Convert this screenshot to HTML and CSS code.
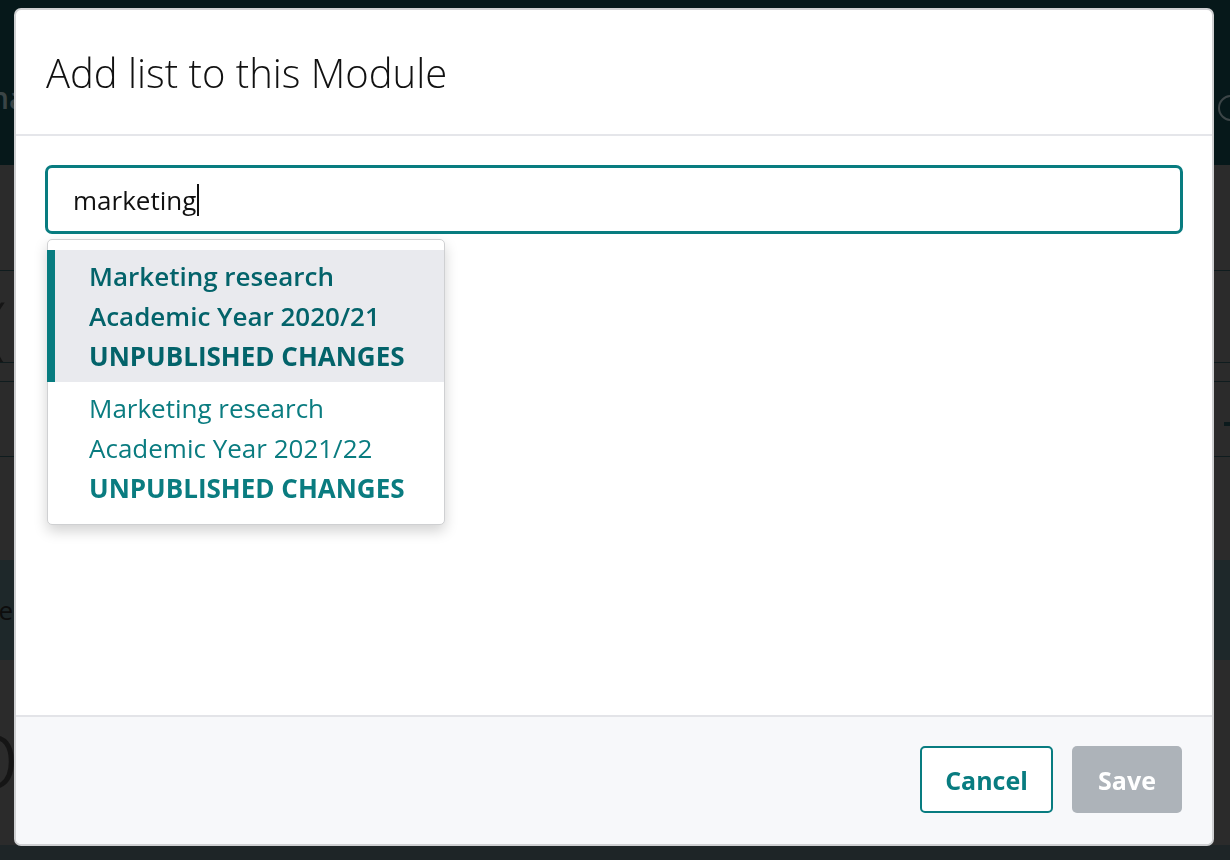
FILE: index.html
```html
<!DOCTYPE html>
<html lang="en">
<head>
<meta charset="utf-8">
<title>Add list to this Module</title>
<link rel="stylesheet" href="styles.css">
</head>
<body>
<div class="page">
  <header class="topbar">
    <span class="topbar-text">na</span>
    <span class="topbar-circle"></span>
  </header>
  <main class="content">
    <div class="content-row row-a"></div>
    <div class="content-row row-b"><span class="big-glyph">(</span></div>
    <div class="content-row row-c"></div>
    <div class="content-row row-d"><span class="dash"></span></div>
    <div class="content-row row-e"></div>
    <div class="band"><span class="band-text">le</span></div>
    <div class="content-row row-f"><span class="big-glyph glyph-p">p</span></div>
  </main>
  <footer class="bottombar"></footer>
</div>

<div class="overlay">
  <div class="modal" role="dialog" aria-labelledby="modal-title">
    <div class="modal-header">
      <h1 id="modal-title" class="modal-title">Add list to this Module</h1>
    </div>
    <div class="modal-body">
      <div class="search">
        <div class="search-input">marketing<span class="caret"></span></div>
        <ul class="suggestions">
          <li class="suggestion active">
            <span class="s-line">Marketing research</span>
            <span class="s-line">Academic Year 2020/21</span>
            <span class="s-line s-status">UNPUBLISHED CHANGES</span>
          </li>
          <li class="suggestion">
            <span class="s-line">Marketing research</span>
            <span class="s-line">Academic Year 2021/22</span>
            <span class="s-line s-status">UNPUBLISHED CHANGES</span>
          </li>
        </ul>
      </div>
    </div>
    <div class="modal-footer">
      <button class="btn btn-outline" type="button">Cancel</button>
      <button class="btn btn-disabled" type="button" disabled>Save</button>
    </div>
  </div>
</div>
</body>
</html>
```

FILE: styles.css
```css
* { box-sizing: border-box; }

html, body {
  margin: 0;
  padding: 0;
  width: 1230px;
  height: 860px;
  overflow: hidden;
  font-family: "Open Sans", "Noto Sans", "Liberation Sans", sans-serif;
  background: #2b2b2b;
}

/* ---------- backdrop page ---------- */
.page {
  display: flex;
  flex-direction: column;
  height: 860px;
  overflow: hidden;
}

.topbar {
  height: 165px;
  flex: none;
  background: #06181a;
  display: flex;
  align-items: center;
  justify-content: space-between;
  color: #3a4446;
}

.topbar-text {
  font-size: 30px;
  font-weight: 600;
  margin-left: -10px;
  margin-top: 30px;
}

.topbar-circle {
  width: 26px;
  height: 26px;
  border: 2px solid #3c4547;
  border-radius: 50%;
  margin-right: -14px;
  margin-top: 50px;
}

.content {
  flex: 1;
  display: flex;
  flex-direction: column;
}

.content-row {
  flex: none;
  border-bottom: 1px solid #0f1c1e;
  position: relative;
  overflow: hidden;
}

.row-a { height: 106px; }
.row-b { height: 92px; }
.row-c { height: 19px; }
.row-d { height: 75px; }
.row-e { height: 103px; border-bottom: 0; }
.row-f { flex: 1; border-bottom: 0; }

.big-glyph {
  font-size: 70px;
  font-weight: 300;
  color: #151515;
  margin-left: -12px;
  line-height: 1;
  display: inline-block;
  margin-top: 20px;
}

.glyph-p {
  font-size: 100px;
  margin-top: 40px;
  margin-left: -40px;
}

.dash {
  position: absolute;
  right: 0;
  top: 40px;
  width: 6px;
  height: 4px;
  background: #0b1a1c;
}

.band {
  flex: none;
  height: 100px;
  background: #1e282a;
  display: flex;
  align-items: center;
  overflow: hidden;
}

.band-text {
  color: #0d0d0d;
  font-size: 26px;
  margin-left: -8px;
}

.bottombar {
  flex: none;
  height: 15px;
  background: #1e2527;
}

/* ---------- modal ---------- */
.overlay {
  position: fixed;
  inset: 0;
}

.modal {
  position: absolute;
  left: 14px;
  top: 8px;
  width: 1200px;
  height: 838px;
  background: #ffffff;
  border: 2px solid #cfd0d2;
  border-radius: 7px;
  display: flex;
  flex-direction: column;
  overflow: hidden;
}

.modal-header {
  height: 126px;
  flex: none;
  display: flex;
  align-items: center;
  padding: 0 30px;
  border-bottom: 2px solid #e5e6ea;
}

.modal-title {
  margin: 0;
  font-size: 40px;
  font-weight: 300;
  color: #111111;
}

.modal-body {
  flex: 1;
  padding: 29px 29px;
}

.search {
  position: relative;
}

.search-input {
  height: 69px;
  border: 3px solid #087c80;
  border-radius: 7px;
  padding: 0 25px;
  display: flex;
  align-items: center;
  font-size: 26px;
  color: #111;
}

.caret {
  display: inline-block;
  width: 2px;
  height: 32px;
  background: #111;
  margin-left: 1px;
}

.suggestions {
  position: absolute;
  left: 2px;
  top: 74px;
  width: 398px;
  margin: 0;
  padding: 10px 0;
  list-style: none;
  background: #fff;
  border: 1px solid #cfd0d2;
  border-radius: 5px;
  box-shadow: 0 6px 14px rgba(0, 0, 0, 0.18);
}

.suggestion {
  display: flex;
  flex-direction: column;
  padding: 6px 16px 6px 34px;
  border-left: 8px solid transparent;
  margin-left: -1px;
  color: #0a7c80;
  font-size: 26px;
  line-height: 40px;
  white-space: nowrap;
}

.suggestion.active {
  background: #e9eaee;
  border-left-color: #087c80;
  color: #03636a;
  font-weight: 600;
}

.s-status {
  font-weight: 700;
}

.modal-footer {
  height: 129px;
  flex: none;
  background: #f7f8fa;
  border-top: 2px solid #e3e4e8;
  display: flex;
  align-items: center;
  justify-content: flex-end;
  gap: 19px;
  padding: 0 30px 2px 0;
}

.btn {
  height: 67px;
  border-radius: 5px;
  font-family: inherit;
  font-size: 25px;
  font-weight: 700;
  padding: 0;
  cursor: pointer;
}

.btn-outline {
  width: 133px;
  background: #fff;
  border: 2px solid #087c80;
  color: #087c80;
}

.btn-disabled {
  width: 110px;
  background: #adb3b9;
  border: 0;
  color: #ffffff;
}
```
